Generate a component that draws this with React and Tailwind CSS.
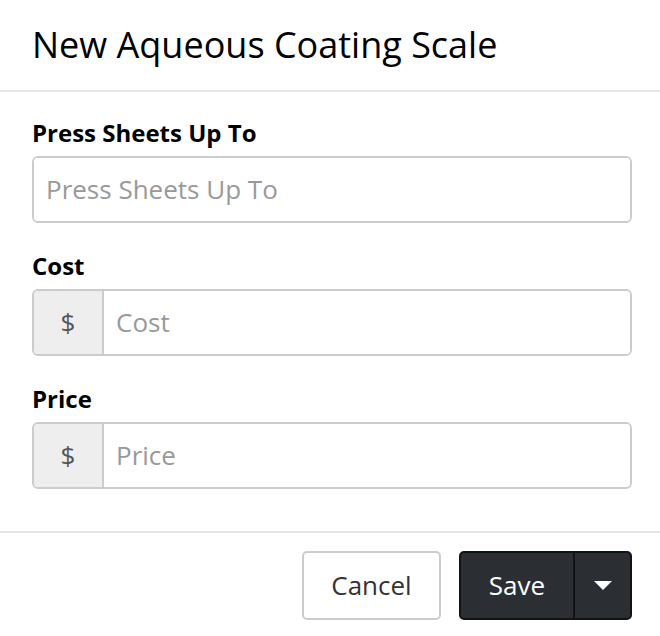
const Field = ({ label, placeholder, addon }) => {
    return (
        <div className="flex flex-col">
            <label className="font-bold text-[24px] leading-[28px] text-black mb-[9px]">{label}</label>
            <div className="flex h-[67px] border-2 border-[#cccccc] rounded-[6px] overflow-hidden">
                {addon && (
                    <span className="w-[70px] flex items-center justify-center bg-[#eeeeee] border-r-2 border-[#cccccc] text-[26px] text-[#555555]">
                        {addon}
                    </span>
                )}
                <input
                    className="flex-1 px-[12px] text-[26px] text-[#555555] placeholder:text-[#999999] outline-none bg-white"
                    placeholder={placeholder}
                />
            </div>
        </div>
    );
};

const App = () => {
    return (
        <div className="w-[660px] h-[636px] bg-white flex flex-col" style={{ fontFamily: "'Open Sans', sans-serif" }}>
            <div className="h-[92px] pl-[32px] flex items-center border-b-2 border-[#e5e5e5]">
                <h4 className="text-[36px] text-black font-normal">New Aqueous Coating Scale</h4>
            </div>

            <div className="flex flex-col gap-[29px] pl-[32px] pr-[28px] pt-[27px] h-[441px] border-b-2 border-[#e5e5e5]">
                <Field label="Press Sheets Up To" placeholder="Press Sheets Up To" />
                <Field label="Cost" placeholder="Cost" addon="$" />
                <Field label="Price" placeholder="Price" addon="$" />
            </div>

            <div className="flex justify-end items-start gap-[18px] px-[28px] pt-[18px]">
                <button className="h-[69px] w-[139px] border-2 border-[#cccccc] rounded-[5px] bg-white text-[26px] text-[#333333]">
                    Cancel
                </button>
                <div className="flex h-[69px] rounded-[5px] overflow-hidden border-2 border-[#111315] bg-[#2b2f33]">
                    <button className="w-[114px] text-[26px] text-white border-r-2 border-[#111315]">Save</button>
                    <button className="w-[55px] flex items-center justify-center">
                        <svg width="18" height="9" viewBox="0 0 18 9">
                            <path d="M0 0 L18 0 L9 9 Z" fill="white" />
                        </svg>
                    </button>
                </div>
            </div>
        </div>
    );
};

export default App;
